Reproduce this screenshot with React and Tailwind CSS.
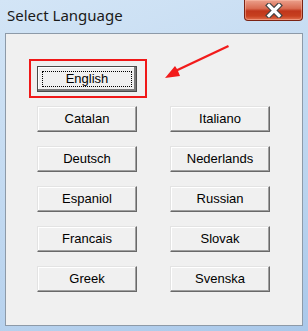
import React from 'react'

// two columns, English sits alone with the arrow pointing at it
const LANGUAGES = [
  'English', null,
  'Catalan', 'Italiano',
  'Deutsch', 'Nederlands',
  'Espaniol', 'Russian',
  'Francais', 'Slovak',
  'Greek', 'Svenska',
]

function LangButton({ label, focused }) {
  if (focused) {
    return (
      <div className="relative h-[26px] w-[100px]">
        {/* red highlight box */}
        <div className="absolute -left-[8px] -top-[7px] h-[39px] w-[118px] border-2 border-[#f01818]" />
        <button className="relative flex h-full w-full items-center justify-center border border-[#4a4a4a] bg-[#f0f0f0] p-0 shadow-[inset_-2px_-2px_0_#7a7a7a,inset_1px_1px_0_#ffffff]">
          <span className="absolute inset-[4px] border border-dotted border-black" />
          <span className="relative text-[13px] font-normal text-black">{label}</span>
        </button>
      </div>
    )
  }
  return (
    <button className="flex h-[26px] w-[100px] items-center justify-center border border-b-[#696969] border-l-[#e3e3e3] border-r-[#696969] border-t-[#e3e3e3] bg-[#f0f0f0] p-0 text-[13px] font-normal text-black shadow-[inset_-1px_-1px_0_#a0a0a0,inset_1px_1px_0_#ffffff]">
      {label}
    </button>
  )
}

export default function App() {
  return (
    <div
      className="relative h-[331px] w-[308px] overflow-hidden bg-[linear-gradient(160deg,#d3e5f6_0%,#c6dcf2_35%,#b9d3ee_70%,#a9c8ea_100%)]"
      style={{ fontFamily: '"Liberation Sans", Arial, sans-serif' }}
    >
      {/* ── Title bar ── */}
      <div className="flex h-[33px] items-start justify-between">
        <div
          className="pl-[7px] pt-[5px] text-[15px] leading-[20px] text-[#1a1a1a]"
          style={{ fontFamily: '"Noto Sans", "Open Sans", sans-serif' }}
        >
          Select Language
        </div>
        <button className="mr-[5px] flex h-[21px] w-[59px] items-center justify-center rounded-b-[4px] border border-t-0 border-[#7a2314] bg-[linear-gradient(180deg,#eba08c_0%,#d96c52_42%,#c0361b_55%,#c7401f_80%,#e2704f_100%)] p-0 shadow-[inset_0_0_0_1px_rgba(255,200,180,0.45)]">
          <svg width="20" height="15" viewBox="0 0 20 15">
            <path d="M5 2.5 L15 12.5 M15 2.5 L5 12.5" stroke="#444" strokeWidth="5.5" strokeLinecap="square" />
            <path d="M5 2.5 L15 12.5 M15 2.5 L5 12.5" stroke="#ffffff" strokeWidth="3.2" strokeLinecap="square" />
          </svg>
        </button>
      </div>

      {/* ── Client panel ── */}
      <div className="ml-[5px] h-[293px] w-[298px] border border-[#8d9aa8] bg-[#f0f0f0] pl-[31px] pt-[32px]">
        <div className="grid grid-cols-[100px_100px] gap-x-[33px] gap-y-[14px]">
          {LANGUAGES.map((label, i) =>
            label ? <LangButton key={i} label={label} focused={label === 'English'} /> : <div key={i} />
          )}
        </div>
      </div>

      {/* red arrow */}
      <svg className="absolute left-0 top-0" width="308" height="331" viewBox="0 0 308 331">
        <polygon points="228,45 229,47 178,71 180,76 165,78 175,66 177,69" fill="#f21b1b" />
      </svg>
    </div>
  )
}
